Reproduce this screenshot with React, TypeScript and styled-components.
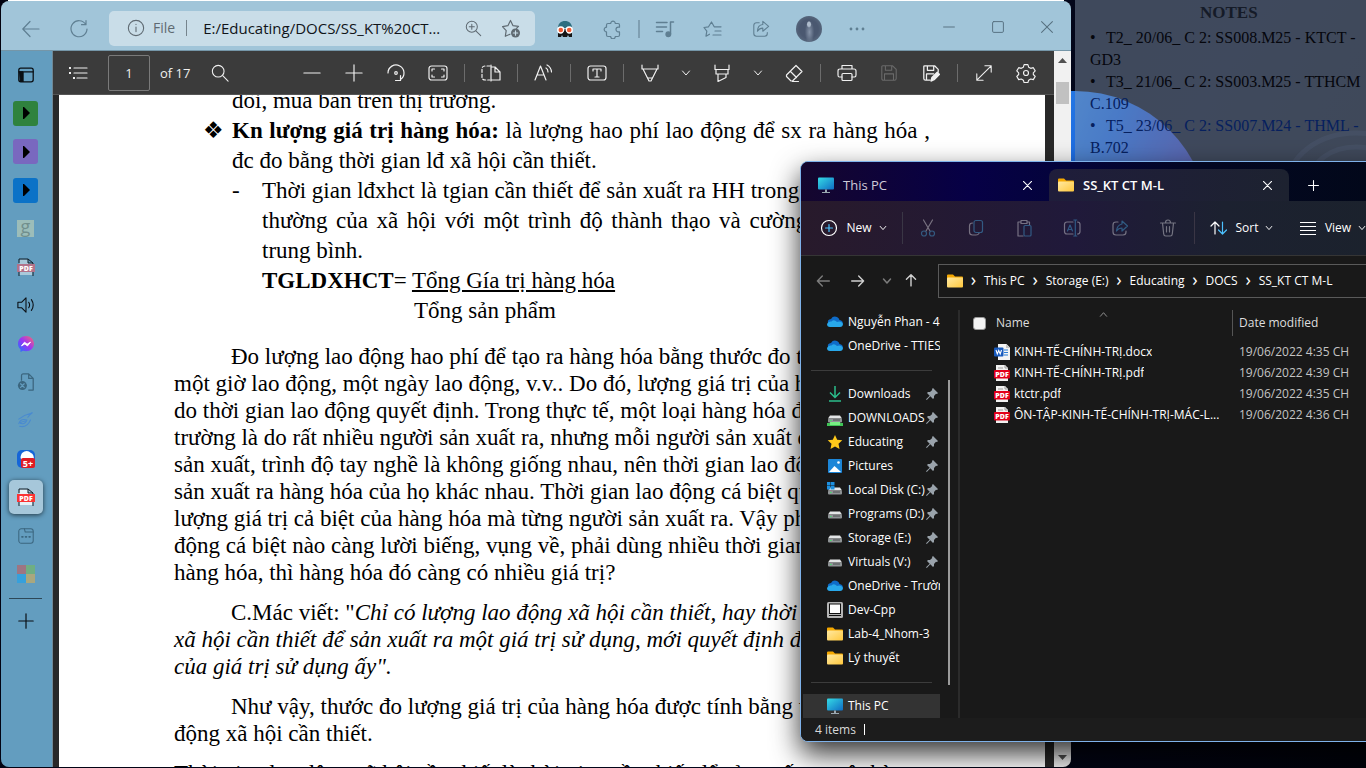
import React from 'react';
import styled, { createGlobalStyle, css } from 'styled-components';

const GlobalStyle = createGlobalStyle`
  * { box-sizing: border-box; }
  html, body, #root { height: 100%; margin: 0; }
  body { overflow: hidden; background: #03061a; }
  button, input { font: inherit; color: inherit; margin: 0; }
  button { display: inline-flex; align-items: center; justify-content: center; border: 0; padding: 0; background: none; }
  a { color: inherit; text-decoration: none; }
  ul { list-style: none; margin: 0; padding: 0; }
  p { margin: 0; }
`;

const ui = `"Segoe UI", "Open Sans", "Noto Sans", sans-serif`;
const serif = `"Times New Roman", "Liberation Serif", serif`;

/* ---------- drawings ---------- */

type IconProps = { size?: number; sw?: number; children: React.ReactNode };
const Icon = ({ size = 20, sw = 1.2, children }: IconProps) => (
  <svg width={size} height={size} viewBox="0 0 20 20" fill="none" stroke="currentColor" strokeWidth={sw} strokeLinecap="round" strokeLinejoin="round" aria-hidden="true">
    {children}
  </svg>
);

const BackArrow = () => <Icon><path d="M18 10H2M9 2.500 1.800 10 9 17.500" /></Icon>;
const Refresh = () => <Icon><path d="M16.800 5.500A8 8 0 1 0 18 10M17 1.500v4.200h-4.500" /></Icon>;
const Info = () => <Icon size={18}><circle cx="10" cy="10" r="8.500" /><path d="M10 9v5M10 6v.2" /></Icon>;
const ZoomIn = () => <Icon size={17}><circle cx="8" cy="8" r="6.500" /><path d="m13 13 5.500 5.500M8 5v6M5 8h6" /></Icon>;
const StarAdd = () => (
  <Icon>
    <path d="M9 16.200 4.300 18.300l.9-5.600L1.500 8.600l5.400-.9L9.500 2.500l2.400 5.100 5.600.8-2 2" />
    <circle cx="14.500" cy="15" r="4.500" fill="currentColor" stroke="none" />
    <path d="M14.500 12.800v4.400M12.300 15h4.400" stroke="#c9dde8" />
  </Icon>
);
const Owl = () => (
  <svg width="18" height="18" viewBox="0 0 18 18" aria-hidden="true">
    <path d="M2 8c0-4.500 3-7 7-7s7 2.500 7 7z" fill="#2d6e80" />
    <path d="M2 9h14v8h-3l-1-2-1 2H7l-1-2-1 2H2z" fill="#151515" />
    <circle cx="4.800" cy="10" r="3.700" fill="#fff" /><circle cx="13.200" cy="10" r="3.700" fill="#fff" />
    <circle cx="4.800" cy="10" r="2.300" fill="#ee5a33" /><circle cx="13.200" cy="10" r="2.300" fill="#ee5a33" />
    <path d="m9 10-3.500 5h7z" fill="#151515" />
  </svg>
);
const Puzzle = () => <Icon><path d="M5 4.500h2.700a2.300 2.300 0 1 1 4.600 0H15q1.500 0 1.500 1.500v2.200h-1.200a2.300 2.300 0 1 0 0 4.600h1.200V16q0 1.500-1.500 1.500h-2.700a2.300 2.300 0 0 1-4.600 0H5q-1.500 0-1.500-1.500v-3.200a2.300 2.300 0 1 1 0-4.600V6q0-1.500 1.500-1.500z" /></Icon>;
const MusicList = () => <Icon sw={1.500}><path d="M1.500 3.500H12M1.500 8h10M1.500 12.500h6M15.500 15V3h3" /><circle cx="13.300" cy="15.300" r="2.200" fill="currentColor" /></Icon>;
const StarList = () => <Icon><path d="m6.500 15.200-3.500 2 .8-5L1 8.500l4.500-.7L8.500 3l2.700 4.800H18M12 12h6M10 16h8" /></Icon>;
const Share = () => <Icon size={18}><path d="M8 3H5a3 3 0 0 0-3 3v9a3 3 0 0 0 3 3h9a3 3 0 0 0 3-3v-1M12 5V1.500L18.500 7 12 12.500V9C9 9 7.500 10 6 12.500 6.200 8 8.500 5.300 12 5z" /></Icon>;
const Dots = () => <Icon><g fill="currentColor" stroke="none"><circle cx="4" cy="10" r="1.400" /><circle cx="10" cy="10" r="1.400" /><circle cx="16" cy="10" r="1.400" /></g></Icon>;
const Minimise = () => <Icon size={12} sw={1.6}><path d="M1 10h18" /></Icon>;
const Maximise = () => <Icon size={12} sw={1.6}><rect x="1" y="1" width="18" height="18" rx="2" /></Icon>;
const Close = ({ size = 12, sw = 1.7 }: { size?: number; sw?: number }) => <Icon size={size} sw={sw}><path d="m1 1 18 18M19 1 1 19" /></Icon>;
const Plus = ({ size = 18, sw = 1.3 }: { size?: number; sw?: number }) => <Icon size={size} sw={sw}><path d="M10 1v18M1 10h18" /></Icon>;
const Minus = () => <Icon size={18} sw={1.3}><path d="M1 10h18" /></Icon>;
const Chevron = ({ size = 10, sw = 2 }: { size?: number; sw?: number }) => <Icon size={size} sw={sw}><path d="m3 6 7 8 7-8" /></Icon>;

const ListIcon = () => <Icon><path d="M6 5h13M6 10h13M9 15h10" /><g fill="currentColor" stroke="none"><rect x="1" y="4" width="2" height="2" /><rect x="1" y="9" width="2" height="2" /><rect x="5" y="14" width="2" height="2" /></g></Icon>;
const Search = () => <Icon size={18}><circle cx="8" cy="8" r="6.500" /><path d="m13 13 6 6" /></Icon>;
const Rotate = () => <Icon><path d="M2 10a8 8 0 1 1 12.500 6.600M14.500 12.500v5h-5" /><circle cx="10" cy="10" r="1.300" /></Icon>;
const FitPage = () => <Icon><rect x="1" y="3" width="18" height="14" rx="2.500" /><path d="M4 8V6h2.500M13.500 6H16v2M16 12v2h-2.500M6.500 14H4v-2" /></Icon>;
const PageView = () => <Icon><path d="M9 3H4.500Q1 3 1 6v8q0 3 3.500 3H9" strokeDasharray="3 2" /><path d="M10 2v16M10 4h4l5 5v8h-9M14 4v5h5" /></Icon>;
const ReadAloud = () => <Icon><path d="m1 17 5.500-14L12 17M3 12h7M12 5q2 1 2 4M13 2q4 2 4.500 7" /></Icon>;
const TextBox = () => <Icon><rect x="1" y="3" width="18" height="14" rx="2.500" /><path d="M6 8V6h8v2M10 6v8M8 14h4" /></Icon>;
const Pen = () => <Icon><path d="M2 2v4h16V2M3 6l6 12h2l6-12M8 15h4" /></Icon>;
const Marker = () => <Icon><path d="M3 2v4.500h14V2M4 6.500V11h12V6.500M6 11v7.500l8-4V11" /></Icon>;
const Eraser = () => <Icon><path d="m2.500 12 9.500-9.500 6 6-9.500 9.500H7l-4.500-4.500zM6.500 8.500l6 6M8.500 18.500h6" /></Icon>;
const Print = () => <Icon><path d="M5 6V2.500h10V6M5 14H2.500Q1 14 1 12V8q0-2 2-2h14q2 0 2 2v4q0 2-1.500 2H15" /><rect x="5" y="10.500" width="10" height="7" rx="1" /></Icon>;
const savePath = 'M3 2h11l4 4v10q0 2-2 2H4q-2 0-2-2V3q0-1 1-1M6 2v5h7V2M5 18v-7h10v7';
const Save = () => <Icon size={18}><path d={savePath} /></Icon>;
const SaveAs = () => <Icon size={18} sw={1.4}><path d="M9 18H4q-2 0-2-2V3q0-1 1-1h11l4 4v3M6 2v5h7V2M5 18v-7h8" /><path d="m10 19 1-4 6-6 2.500 2.500-6 6z" fill="currentColor" /></Icon>;
const Expand = () => <Icon size={18}><path d="m2 18 16-16M11 2h7v7M9 18H2v-7" /></Icon>;
const Gear = () => <Icon><circle cx="10" cy="10" r="2.500" /><path d="m8 1.500 4 0 .8 2.700 2.200 1.200 2.700-.7 2 3.400-2 2 0 1.800 2 2-2 3.400-2.700-.7-2.200 1.300-.8 2.600H8l-.8-2.600L5 16.600l-2.700.7-2-3.400 2-2v-1.800l-2-2 2-3.400 2.700.7 2.200-1.200z" transform="translate(.5 .2) scale(.95)" /></Icon>;

const Panel = () => <Icon size={16} sw={1.600}><rect x="1" y="1.500" width="18" height="17" rx="2.500" /><path d="M1 6h18M6 6v12" /><path d="M2 6h4v12H3z" fill="currentColor" /></Icon>;
const Play = () => <svg width="8" height="12" viewBox="0 0 8 12" aria-hidden="true"><path d="M1 0h1l6 6-6 6H1z" fill="#000" /></svg>;
const PdfPage = ({ label, page }: { label: string; page: string }) => (
  <svg width="18" height="18" viewBox="0 0 18 18" aria-hidden="true">
    <path d="M2.500 1.500H11V5h4.500v12h-13z" fill={page} />
    <path d="M2 5V1h9l5 4v2M11 1v4h5M2 14v4M16 14v4" fill="none" stroke="#101c26" />
    <rect y="6" width="18" height="8" fill={label} />
    <text x="9" y="12.500" fontFamily="Open Sans" fontSize="7" fontWeight="800" textAnchor="middle" fill="#fff">PDF</text>
  </svg>
);
const Speaker = () => <Icon size={18}><path d="M1 7v6h4l5 5V2L5 7zM13 7q2 3 0 6M16 4q4 6 0 12" /></Icon>;
const Messenger = () => (
  <svg width="16" height="16" viewBox="0 0 16 16" aria-hidden="true">
    <defs><linearGradient id="msg" x1="0" y1="1" x2="1" y2="0"><stop offset="0" stopColor="#1677ff" /><stop offset=".5" stopColor="#9a35f5" /><stop offset="1" stopColor="#ff6a6a" /></linearGradient></defs>
    <path d="M8 0C3.500 0 0 3.300 0 7.700c0 2.400 1 4.300 2.500 5.600V16l2.400-1.200c1 .3 2 .4 3.100.4 4.500 0 8-3.200 8-7.500S12.500 0 8 0z" fill="url(#msg)" />
    <path d="m3.500 9.800 3-3.600 2.600 2 3.400-2-3 3.700-2.600-2z" fill="#fff" stroke="#fff" strokeLinejoin="round" />
  </svg>
);
const DeadPage = () => <Icon size={18} sw={1.400}><path d="M5 8V3q0-2 2-2h6l5 5v13h-5M13 1v5h5" /><circle cx="6" cy="14" r="5" fill="currentColor" stroke="none" /><path d="m4 12 4 4M8 12l-4 4" stroke="#639dbf" /></Icon>;
const Swirl = () => <Icon size={18}><path d="M2 9q7-5 15-7-3 2-5 5M3 17q8 2 12-7M2 14q2-6 9-4-2 5-6 4t4-3" /></Icon>;
const FivePlus = () => (
  <svg width="18" height="18" viewBox="0 0 18 18" aria-hidden="true">
    <rect width="18" height="18" rx="5" fill="#1565d8" /><path d="M5 3q5-4 9 0 3 1 3 7H5Q2 8 5 3" fill="#fff" />
    <rect x="4" y="8" width="14" height="10" rx="2" fill="#e01b24" />
    <text x="11" y="16.500" fontFamily="Open Sans" fontSize="9" fontWeight="700" textAnchor="middle" fill="#fff">5+</text>
  </svg>
);
const TabBox = () => <Icon size={16} sw={1.300}><rect x="1" y="1" width="18" height="18" rx="3" /><path d="M8 1l1 4h10" /><path d="M5 11h1M9.500 11h1M14 11h1" strokeWidth="2.200" /></Icon>;
const Squares = () => <svg width="18" height="18" viewBox="0 0 18 18" aria-hidden="true"><path fill="#9d7583" d="M0 0h9v9H0z" /><path fill="#6fae83" d="M9 0h9v9H9z" /><path fill="#36a0dc" d="M0 9h9v9H0z" /><path fill="#a9a77e" d="M9 9h9v9H9z" /></svg>;

const Monitor = () => (
  <svg width="16" height="16" viewBox="0 0 16 16" aria-hidden="true">
    <defs><linearGradient id="mon" x2="1" y2="1"><stop stopColor="#35dbe5" /><stop offset="1" stopColor="#0f6cc4" /></linearGradient></defs>
    <rect y="0.500" width="16" height="12" rx="1" fill="url(#mon)" /><path d="M7 12.500h2V15h3v1H4v-1h3z" fill="#9aa7b0" />
  </svg>
);
const Folder = () => (
  <svg width="16" height="16" viewBox="0 0 16 16" aria-hidden="true">
    <defs><linearGradient id="fol" x2="1" y2="1"><stop stopColor="#ffe9a2" /><stop offset="1" stopColor="#ffc83d" /></linearGradient></defs>
    <path d="M0 2.500Q0 1.500 1 1.500h5l2 2h7q1 0 1 1V8H0z" fill="#f5a800" /><rect y="4.500" width="16" height="10" rx="1" fill="url(#fol)" />
  </svg>
);
const Cloud = () => (
  <svg width="16" height="16" viewBox="0 0 16 16" aria-hidden="true">
    <path d="M1 9Q0 5.500 4 5q2-3.500 6-2 2 .8 2.500 3Q16 6.500 16 10z" fill="#0f6cc8" />
    <path d="M0 10q1-3 4.500-2.500Q7 5 10 8q4-1.500 6 2-.2 3-3 3H3q-3 0-3-3" fill="#28a8ea" />
  </svg>
);
const DownloadIcon = () => <svg width="16" height="16" viewBox="0 0 16 16" fill="none" stroke="#2bbd8b" strokeWidth="1.500" aria-hidden="true"><path d="M8 0v11M3 6.500l5 5 5-5M2 15h12" /></svg>;
const Drive = ({ tone }: { tone?: 'green' | 'win' }) => (
  <svg width="16" height="16" viewBox="0 0 16 16" aria-hidden="true">
    <path d="m1 8.500 2-3h10l2 3z" fill="#e3e5e6" /><rect x="1" y="8.500" width="14" height="4" rx="1" fill="#8f9496" /><path d="M3 10h1.500v1H3z" fill="#41e36a" /><path d="M6 10h7" stroke="#4c4f50" />
    {tone === 'green' && <><path d="M0 13h16v3H0z" fill="#3fc456" /><path d="M3 12h10v3H3z" fill="#77ef83" /></>}
    {tone === 'win' && <path d="M0 0h3.500v3.500H0zM4 0h3.500v3.500H4zM0 4h3.500v3.500H0zM4 4h3.500v3.500H4z" fill="#1d90e0" />}
  </svg>
);
const Star = () => <svg width="16" height="16" viewBox="0 0 16 16" aria-hidden="true"><path d="m8 1 2.200 4.700 5.100.6-3.800 3.500 1 5.100L8 12.400l-4.500 2.500 1-5.100L.7 6.300l5.100-.6z" fill="#ffc91a" /></svg>;
const Picture = () => <svg width="16" height="16" viewBox="0 0 16 16" aria-hidden="true"><rect x="1" y="1" width="14" height="14" rx="1" fill="#1c86d8" /><path d="m2 14 5.500-6L14 14z" fill="#fff" /><circle cx="11.500" cy="4.500" r="1.300" fill="#fff" /></svg>;
const DevBox = () => <svg width="16" height="16" viewBox="0 0 16 16" aria-hidden="true"><rect width="16" height="16" rx="1.500" fill="#b5b5b5" /><rect x="2.500" y="2" width="11" height="9.500" fill="#fff" stroke="#111" /><path d="M2 13.500h12" stroke="#111" /></svg>;
const Pin = () => <svg width="12" height="12" viewBox="0 0 12 12" aria-hidden="true"><path d="m7 0 5 5-1 1-1-.2-2 2.200v2L7 11 4.300 8.300.8 12 0 11.200l3.700-3.500L1 5l1-1h2l2.200-2L6 1z" fill="#9aa3ab" /></svg>;
const WordFile = () => (
  <svg width="16" height="16" viewBox="0 0 16 16" aria-hidden="true">
    <path d="M4 0h8.500L16 3.500V16H4z" fill="#f4f4f4" /><path d="M12 0v4h4" fill="#c4c4c4" /><path d="M10 6h4M10 8.500h4M10 11h4" stroke="#2b7cd3" />
    <rect y="3.500" width="9.500" height="9" rx="1" fill="#185abd" /><path d="m2 6 1.300 4L4.700 6.500 6.200 10l1.300-4" fill="none" stroke="#fff" strokeWidth="1.100" />
  </svg>
);
const PdfFile = () => (
  <svg width="16" height="16" viewBox="0 0 16 16" aria-hidden="true">
    <path d="M2 0h9l3 3v13H2z" fill="#f1f1f1" /><path d="M11 0v3h3M4 3h5" fill="none" stroke="#9c9c9c" />
    <rect y="5" width="16" height="8.500" rx="1" fill="#e2001a" />
    <text x="8" y="11.800" fontFamily="Open Sans" fontSize="7" fontWeight="800" textAnchor="middle" fill="#fff">PDF</text>
  </svg>
);

const Two = styled.svg.attrs({ width: 20, height: 20, viewBox: '0 0 20 20', 'aria-hidden': true })`
  fill: none; stroke: currentColor; stroke-width: 1.2; stroke-linecap: round; stroke-linejoin: round;
  .b { stroke: #4cc2ff; }
`;
const NewIcon = () => <Two><circle cx="10" cy="10" r="7.500" /><path className="b" d="M10 6.500v7M6.500 10h7" /></Two>;
const Cut = () => <Two><path d="m5.500 2 6.500 11M14.500 2 8 13" /><g className="b"><circle cx="6" cy="15.500" r="2.500" /><circle cx="14" cy="15.500" r="2.500" /></g></Two>;
const Copy = () => <Two><path d="M6.500 5Q3.500 5 3.500 8v6q0 3 3 3H10q2 0 3-1.500" /><rect className="b" x="8" y="2.500" width="8.500" height="12" rx="2" /></Two>;
const Paste = () => <Two><path d="M7 4H4v14h5M13 4h2.500v3M7 2.500h6v3H7z" /><rect className="b" x="10" y="7.500" width="7" height="10.500" rx="1" /></Two>;
const Rename = () => <Two><path d="M11 4H5Q2.500 4 2.500 6.500v7Q2.500 16 5 16h6M15.500 4q2.500 0 2.500 2.500v7q0 2.500-2.500 2.500" /><path className="b" d="M13.300 2v16M11.800 2h3M11.800 18h3M5.500 13 8 7l2.500 6M6.300 11.500h3.500" /></Two>;
const ShareBlue = () => <Two><path d="M8 4H6Q3 4 3 7v7q0 3 3 3h7q3 0 3-3v-1" /><path className="b" d="M12 6V3l5.500 5-5.500 5v-3Q8.500 10 6.500 13 7 7 12 6z" /></Two>;
const Trash = () => <Two><path d="M2.500 5h15M4.500 5l1.200 11q.2 2 2 2h4.600q1.800 0 2-2L15.500 5M7.500 5q0-3 2.500-3t2.500 3M8.500 8.500v5.500M11.500 8.500v5.500" /></Two>;
const SortIcon = () => <Two><path d="M6 16V4M2 8l4-4 4 4" /><path className="b" d="M13.500 4v12M9.500 12l4 4 4-4" /></Two>;
const ViewIcon = () => <Two><path d="M2 4.500h16M2 8.500h16M2 12.500h16M2 16.500h16" strokeLinecap="butt" /></Two>;

/* ---------- desktop ---------- */

const Desktop = styled.main`
  position: relative;
  width: 100%;
  height: 100vh;
  min-height: 600px;
  overflow: hidden;
  background: linear-gradient(120deg, #02020f, #03071c 70%, #01020a);
`;
const Bloom = styled.svg`
  position: absolute;
  top: 0;
  right: 0;
`;
const Notes = styled.aside`
  position: absolute;
  top: 0;
  right: 0;
  width: 291px;
  height: 200px;
  padding: 2px 0 0 15px;
  background: rgba(138, 156, 172, 0.45);
  font: 16px/22px "Palatino Linotype", "Book Antiqua", "Liberation Serif", serif;
  color: #05060c;
  white-space: nowrap;
`;
const NotesTitle = styled.h2`
  margin: 0 0 3px 110px;
  font: inherit;
  font-size: 17px;
  font-weight: 700;
  color: #151b28;
`;
const NoteLine = styled.li<{ $blue?: boolean }>`
  color: ${p => (p.$blue ? '#06205e' : 'inherit')};
`;
const Bullet = styled.span`
  display: inline-block;
  width: 16px;
`;

/* ---------- browser ---------- */

const Browser = styled.section`
  position: absolute;
  top: 1px;
  left: 1px;
  right: 295px;
  bottom: 1px;
  display: flex;
  flex-direction: column;
  border-radius: 8px;
  overflow: hidden;
  background: #282828;
  font-family: ${ui};
`;
const TopEdge = styled.div`
  position: absolute;
  top: 0;
  left: 8px;
  right: 302px;
  height: 1px;
  background: #fff;
`;
const TitleBar = styled.header`
  display: flex;
  align-items: center;
  gap: 16px;
  height: 50px;
  flex: none;
  padding: 0 0 0 14px;
  background: #a1c5d9;
  border-bottom: 1px solid #7596a8;
  color: #5f7f92;
`;
const IconButton = styled.button`
  width: 32px;
  height: 32px;
  flex: none;
  padding-top: 6px;
`;
const Address = styled.div`
  display: flex;
  align-items: center;
  flex: 1;
  min-width: 0;
  height: 35px;
  margin: 5px -2px 0;
  padding: 0 8px 0 18px;
  border-radius: 5px;
  background: #c9dde8;
  color: #5f6a72;
  font-size: 15px;
`;
const FileLabel = styled.label`
  padding: 0 11px 0 8px;
  border-right: 1px solid #76848d;
  line-height: 16px;
  margin-right: 16px;
  font-size: 14px;
`;
const Url = styled.input`
  flex: 1;
  min-width: 0;
  border: 0;
  padding: 0;
  background: none;
  color: #101418;
  outline: 0;
  text-overflow: ellipsis;
`;
const AddressButton = styled.button`
  width: 32px;
  height: 32px;
  margin-left: 6px;
`;
const BarRule = styled.span`
  width: 2px;
  height: 18px;
  margin: 6px -7px 0;
  background: #7f9fb2;
`;
const Avatar = styled.span`
  width: 26px;
  height: 26px;
  border-radius: 50%;
  background:
    radial-gradient(ellipse at 50% 32%, #aebccc 0 8%, transparent 14%),
    radial-gradient(ellipse 18% 45% at 52% 62%, #8593a8, transparent),
    radial-gradient(circle at 50% 50%, #4a5870 50%, #66798c);
`;
const Controls = styled.div`
  display: flex;
  margin-left: 35px;
  align-self: stretch;
  color: #56707f;
`;
const Control = styled.button`
  width: 49px;
  padding-top: 2px;
`;
const Body = styled.div`
  display: flex;
  flex: 1;
  min-height: 0;
`;
const Sidebar = styled.nav`
  width: 52px;
  flex: none;
  display: flex;
  flex-direction: column;
  align-items: center;
  padding: 7px 2px 0 0;
  background: #639dbf;
  border-right: 1px solid #6f8896;
`;
const SideTabs = styled.ul`
  display: flex;
  flex-direction: column;
  justify-content: space-between;
  height: 533px;
`;
const SideTab = styled.button<{ $active?: boolean; $dim?: boolean }>`
  width: 34px;
  height: 34px;
  display: flex;
  color: ${p => (p.$dim ? '#3b667f' : '#0a0f14')};
  ${p => p.$active && css`
    border-radius: 5px;
    background: #a6c7da;
    box-shadow: 0 1px 5px rgba(0, 0, 0, 0.65);
  `}
`;
const Tile = styled.span<{ $bg: string }>`
  display: grid;
  place-items: center;
  width: 25px;
  height: 25px;
  border-radius: 3px;
  background: ${p => p.$bg};
`;
const Goodreads = styled.span`
  width: 17px;
  height: 17px;
  background: #9cbdb9;
  color: #718f8d;
  font-size: 18px;
  line-height: 12px;
`;
const SwirlTint = styled.span`
  display: flex;
  color: #4a8bd0;
`;
const SideRule = styled.hr`
  width: 33px;
  margin: 7px 0 5px;
  border: 0;
  border-top: 1px solid #2d4757;
`;
const Viewer = styled.div`
  flex: 1;
  min-width: 0;
  display: flex;
  flex-direction: column;
`;
const PdfBar = styled.div`
  display: flex;
  justify-content: space-between;
  height: 44px;
  flex: none;
  padding: 0 12px 0 9px;
  background: #3b3b3b;
  border-bottom: 1px solid #555;
  color: #f0f0f0;
  font-size: 13px;
`;
const ToolGroup = styled.div`
  display: flex;
  align-items: center;
  gap: 10px;
`;
const Tool = styled.button<{ $narrow?: boolean }>`
  width: ${p => (p.$narrow ? 20 : 32)}px;
  height: 32px;
  &:disabled { color: #6a6a6a; }
`;
const ToolRule = styled.span`
  width: 1px;
  height: 18px;
  background: #6c6c6c;
`;
const PageBox = styled.input`
  width: 42px;
  height: 36px;
  margin-left: 4px;
  border: 1px solid #7a7a7a;
  border-radius: 2px;
  background: none;
  text-align: center;
`;
const PageCount = styled.label`
  width: 34px;
  white-space: nowrap;
`;
const ScrollArea = styled.div`
  flex: 1;
  min-height: 0;
  overflow: hidden;
  padding: 0 9px 0 6px;
`;
const Split = styled.div`
  display: flex;
  flex: 1;
  min-width: 0;
`;
const Scrollbar = styled.div`
  width: 17px;
  flex: none;
  display: flex;
  flex-direction: column;
  align-items: center;
  padding: 7px 0 6px;
  background: #f1f1f1;
  color: #505050;
`;
const Thumb = styled.div`
  width: 13px;
  height: 22px;
  margin: 18px 0 auto;
  background: #c1c1c1;
`;
const Sheet = styled.article`
  height: 100%;
  overflow: hidden;
  padding: 0 115px;
  background: #fff;
  color: #000;
  font: 23px/27px ${serif};
  white-space: nowrap;
`;
const Outline = styled.div`
  margin: -9px 0 17px;
  padding-left: 58px;
  line-height: 30px;
`;
const Nested = styled.div`
  padding-left: 30px;
`;
const Paragraph = styled.p`
  margin-bottom: 13px;
  text-indent: 57px;
`;
const Line = styled.span<{ $justify?: boolean }>`
  display: block;
  text-align: justify;
  text-align-last: ${p => (p.$justify ? 'justify' : 'left')};
  & + & { text-indent: 0; }
`;
const Hang = styled.span<{ $w: number }>`
  display: inline-block;
  width: ${p => p.$w}px;
  margin-left: -${p => p.$w}px;
  text-align-last: left;
  font-family: ${serif}, "DejaVu Sans";
`;
const Fraction = styled.p`
  padding-left: 152px;
`;

/* ---------- file explorer ---------- */

const Explorer = styled.section`
  position: absolute;
  top: 161px;
  left: 800px;
  right: -40px;
  bottom: 26px;
  display: flex;
  flex-direction: column;
  border: 1px solid #7fb2ea;
  border-radius: 8px;
  overflow: hidden;
  background: #191919;
  box-shadow: 0 12px 28px rgba(0, 0, 0, 0.8);
  color: #fff;
  font: 12px/16px ${ui};
  white-space: nowrap;
`;
const TabStrip = styled.div`
  display: flex;
  align-items: flex-end;
  height: 39px;
  flex: none;
  background: linear-gradient(90deg, #15062e, #060046 28%, #04043a 45%, #030722 65%, #020818);
`;
const Tab = styled.div<{ $active?: boolean }>`
  display: flex;
  align-items: center;
  width: ${p => (p.$active ? 240 : 248)}px;
  height: 32px;
  padding: 0 14px 0 ${p => (p.$active ? 9 : 17)}px;
  border-radius: 8px 8px 0 0;
  background: ${p => (p.$active ? 'linear-gradient(90deg, #1f1d3b, #1d2230)' : 'none')};
  color: ${p => (p.$active ? '#fff' : '#cfcbd8')};
  font-size: 13px;
  font-weight: ${p => (p.$active ? 600 : 400)};
  span { flex: 1; margin-left: 9px; }
`;
const TabClose = styled.button`
  width: 16px;
  height: 16px;
  color: #fff;
`;
const NewTab = styled.button`
  width: 48px;
  height: 32px;
  color: #fff;
`;
const Commands = styled.div`
  display: flex;
  align-items: center;
  height: 55px;
  flex: none;
  background: linear-gradient(90deg, #281a2b, #20193a 45%, #1c2130 70%, #1b222c);
  border-bottom: 1px solid #353535;
  font-weight: 500;
`;
const Command = styled.button<{ $w: number }>`
  width: ${p => p.$w}px;
  height: 36px;
  gap: 7px;
  flex: none;
  &:disabled { opacity: 0.38; }
`;
const CommandRule = styled.span<{ $right?: boolean }>`
  width: 1px;
  height: 32px;
  margin: 0 ${p => (p.$right ? 12 : 1)}px 0 ${p => (p.$right ? 2 : -3)}px;
  background: #3a3645;
`;
const PathRow = styled.div`
  display: flex;
  align-items: center;
  height: 54px;
  flex: none;
  padding: 0 0 5px 4px;
`;
const NavButton = styled.button<{ $dim?: boolean; $narrow?: boolean }>`
  width: ${p => (p.$narrow ? 24 : 35)}px;
  height: 32px;
  color: ${p => (p.$dim ? '#7c7c7c' : '#d0d0d0')};
`;
const Crumbs = styled.ol`
  display: flex;
  align-items: center;
  flex: 1;
  height: 34px;
  margin: 0 0 0 15px;
  padding: 0 0 0 8px;
  border: 1px solid #5a5a5a;
  list-style: none;
  li { display: flex; align-items: center; }
  li::after { content: "›"; width: 21px; text-align: center; font-size: 18px; line-height: 14px; padding-bottom: 3px; }
  li:last-child::after { content: none; }
`;
const Panes = styled.div`
  display: flex;
  flex: 1;
  min-height: 0;
`;
const NavPane = styled.nav`
  display: flex;
  width: 159px;
  flex: none;
  border-right: 2px solid #2b2b2b;
`;
const NavList = styled.ul`
  width: 139px;
  overflow: hidden;
`;
const NavItem = styled.a<{ $selected?: boolean }>`
  display: flex;
  align-items: center;
  height: 24px;
  margin-left: 2px;
  padding-left: 24px;
  background: ${p => (p.$selected ? '#333' : 'none')};
  span { flex: 1; margin-left: 5px; }
  svg { flex: none; }
  svg + span + svg { margin-right: 2px; }
`;
const NavRule = styled.li`
  height: 24px;
  padding-top: 12px;
  &::before { content: ""; display: block; margin: 0 8px 0 10px; border-top: 1px solid #3c3c3c; }
`;
const NavScroll = styled.div`
  width: 2px;
  height: 305px;
  margin: 70px 0 0 8px;
  background: #9b9b9b;
`;
const Files = styled.table`
  align-self: flex-start;
  width: 100%;
  table-layout: fixed;
  border-collapse: collapse;
  th, td { padding: 0; text-align: left; font-weight: 400; height: 21px; }
  thead th { height: 31px; padding-bottom: 5px; color: #dedede; }
  th:first-child { width: 272px; padding-left: 13px; }
  td:first-child { padding-left: 34px; }
  td:last-child { padding-left: 7px; color: #c4c4c4; }
`;
const HeadCell = styled.div`
  display: flex;
  align-items: center;
  gap: 10px;
  height: 26px;
`;
const DateHead = styled.div`
  height: 26px;
  padding-left: 6px;
  border-left: 1px solid #555;
  line-height: 26px;
`;
const SortMark = styled.span`
  align-self: flex-start;
  margin: 0 0 0 59px;
  height: 8px;
  color: #9a9a9a;
  svg { display: block; transform: rotate(180deg); }
`;
const SelectAll = styled.input`
  appearance: none;
  width: 13px;
  height: 13px;
  border-radius: 3px;
  background: #f3f3f3;
  border: 1px solid #999;
`;
const FileLink = styled.a`
  display: flex;
  align-items: center;
  gap: 4px;
  width: 230px;
  svg { flex: none; }
  span { overflow: hidden; text-overflow: ellipsis; }
`;
const Status = styled.footer`
  display: flex;
  align-items: center;
  gap: 8px;
  height: 23px;
  flex: none;
  padding-left: 14px;
  background: #1c1c1c;
  color: #d8d8d8;
  &::after { content: ""; width: 1px; height: 11px; background: #fff; }
`;

/* ---------- data ---------- */

const sideTabs: { name: string; icon: React.ReactNode; dim?: boolean; active?: boolean }[] = [
  { name: 'Tab actions', icon: <Panel /> },
  { name: 'Green group', icon: <Tile $bg="#2f823e"><Play /></Tile> },
  { name: 'Purple group', icon: <Tile $bg="#7968bf"><Play /></Tile> },
  { name: 'Blue group', icon: <Tile $bg="#0b72c7"><Play /></Tile> },
  { name: 'Goodreads', icon: <Goodreads>g</Goodreads> },
  { name: 'PDF, sleeping', icon: <PdfPage label="#b2738a" page="#a9c9da" />, dim: true },
  { name: 'Playing audio', icon: <Speaker /> },
  { name: 'Messenger', icon: <Messenger /> },
  { name: 'Unavailable page', icon: <DeadPage />, dim: true },
  { name: 'Course page', icon: <SwirlTint><Swirl /></SwirlTint> },
  { name: 'Notifications', icon: <FivePlus /> },
  { name: 'PDF', icon: <PdfPage label="#fb3434" page="#e8f1f6" />, active: true },
  { name: 'New tab', icon: <TabBox />, dim: true },
  { name: 'Microsoft', icon: <Squares /> },
];

const navTop: [string, React.ReactNode][] = [['Nguyễn Phan - 4t', <Cloud />], ['OneDrive - TTIES', <Cloud />]];
const navMain: [string, React.ReactNode, boolean?][] = [
  ['Downloads', <DownloadIcon />, true],
  ['DOWNLOADS', <Drive tone="green" />, true],
  ['Educating', <Star />, true],
  ['Pictures', <Picture />, true],
  ['Local Disk (C:)', <Drive tone="win" />, true],
  ['Programs (D:)', <Drive />, true],
  ['Storage (E:)', <Drive />, true],
  ['Virtuals (V:)', <Drive />, true],
  ['OneDrive - Trường', <Cloud />],
  ['Dev-Cpp', <DevBox />],
  ['Lab-4_Nhom-3', <Folder />],
  ['Lý thuyết', <Folder />],
];
const files: [string, string, React.ReactNode][] = [
  ['KINH-TẾ-CHÍNH-TRỊ.docx', '19/06/2022 4:35 CH', <WordFile />],
  ['KINH-TẾ-CHÍNH-TRỊ.pdf', '19/06/2022 4:39 CH', <PdfFile />],
  ['ktctr.pdf', '19/06/2022 4:35 CH', <PdfFile />],
  ['ÔN-TẬP-KINH-TẾ-CHÍNH-TRỊ-MÁC-L...', '19/06/2022 4:36 CH', <PdfFile />],
];
const measure = [
  'Đo lượng lao động hao phí để tạo ra hàng hóa bằng thước đo thời',
  'một giờ lao động, một ngày lao động, v.v.. Do đó, lượng giá trị của hàng',
  'do thời gian lao động quyết định. Trong thực tế, một loại hàng hóa được',
  'trường là do rất nhiều người sản xuất ra, nhưng mỗi người sản xuất do',
  'sản xuất, trình độ tay nghề là không giống nhau, nên thời gian lao động',
  'sản xuất ra hàng hóa của họ khác nhau. Thời gian lao động cá biệt quyết',
  'lượng giá trị cả biệt của hàng hóa mà từng người sản xuất ra. Vậy phải',
  'động cá biệt nào càng lười biếng, vụng về, phải dùng nhiều thời gian',
  'hàng hóa, thì hàng hóa đó càng có nhiều giá trị?',
];
const quote = [
  'Chỉ có lượng lao động xã hội cần thiết, hay thời gian',
  'xã hội cần thiết để sản xuất ra một giá trị sử dụng, mới quyết định đại',
  'của giá trị sử dụng ấy".',
];

/* ---------- composition ---------- */

const Document = () => (
  <Sheet>
    <Outline>
      <Line>đổi, mua bán trên thị trường.</Line>
      <Line $justify><Hang $w={29}>❖</Hang><b>Kn lượng giá trị hàng hóa:</b> là lượng hao phí lao động để sx ra hàng hóa ,</Line>
      <Line>đc đo bằng thời gian lđ xã hội cần thiết.</Line>
      <Nested>
        <Line><Hang $w={30}>-</Hang>Thời gian lđxhct là tgian cần thiết để sản xuất ra HH trong</Line>
        <Line $justify>thường của xã hội với một trình độ thành thạo và cường độ lao động</Line>
        <Line>trung bình.</Line>
        <p><b>TGLDXHCT</b>= <u>Tổng Gía trị hàng hóa</u></p>
        <Fraction>Tổng sản phẩm</Fraction>
      </Nested>
    </Outline>
    <Paragraph>{measure.map(t => <Line key={t}>{t}</Line>)}</Paragraph>
    <Paragraph>
      <Line>C.Mác viết: "<i>{quote[0]}</i></Line>
      <Line><i>{quote[1]}</i></Line>
      <Line><i>{quote[2]}</i></Line>
    </Paragraph>
    <Paragraph>
      <Line>Như vậy, thước đo lượng giá trị của hàng hóa được tính bằng thời</Line>
      <Line>động xã hội cần thiết.</Line>
    </Paragraph>
    <p><Line>Thời gian lao động xã hội cần thiết là thời gian cần thiết để sản xuất ra một hàng</Line></p>
  </Sheet>
);

const BrowserWindow = () => (
  <Browser aria-label="Browser">
    <TitleBar>
      <IconButton aria-label="Back"><BackArrow /></IconButton>
      <IconButton aria-label="Refresh"><Refresh /></IconButton>
      <Address>
        <Info />
        <FileLabel htmlFor="url">File</FileLabel>
        <Url id="url" defaultValue="E:/Educating/DOCS/SS_KT%20CT%2..." />
        <AddressButton aria-label="Zoom"><ZoomIn /></AddressButton>
        <AddressButton aria-label="Add to favorites"><StarAdd /></AddressButton>
      </Address>
      <IconButton aria-label="Owl extension"><Owl /></IconButton>
      <IconButton aria-label="Extensions"><Puzzle /></IconButton>
      <BarRule />
      <IconButton aria-label="Media"><MusicList /></IconButton>
      <IconButton aria-label="Favorites"><StarList /></IconButton>
      <IconButton aria-label="Share"><Share /></IconButton>
      <IconButton aria-label="Profile"><Avatar /></IconButton>
      <IconButton aria-label="More"><Dots /></IconButton>
      <Controls>
        <Control aria-label="Minimize"><Minimise /></Control>
        <Control aria-label="Maximize"><Maximise /></Control>
        <Control aria-label="Close"><Close /></Control>
      </Controls>
    </TitleBar>
    <Body>
      <Sidebar aria-label="Vertical tabs">
        <SideTabs>
          {sideTabs.map(t => (
            <li key={t.name}><SideTab aria-label={t.name} $dim={t.dim} $active={t.active}>{t.icon}</SideTab></li>
          ))}
        </SideTabs>
        <SideRule />
        <SideTab aria-label="Add tab"><Plus size={16} sw={1.5} /></SideTab>
      </Sidebar>
      <Split>
        <Viewer>
          <PdfBar>
            <ToolGroup>
              <Tool aria-label="Contents"><ListIcon /></Tool>
              <PageBox id="page" defaultValue="1" />
              <PageCount htmlFor="page">of 17</PageCount>
              <Tool aria-label="Find"><Search /></Tool>
            </ToolGroup>
            <ToolGroup>
              <Tool aria-label="Zoom out"><Minus /></Tool>
              <Tool aria-label="Zoom in"><Plus /></Tool>
              <Tool aria-label="Rotate"><Rotate /></Tool>
              <Tool aria-label="Fit to page"><FitPage /></Tool>
              <ToolRule />
              <Tool aria-label="Page view"><PageView /></Tool>
              <ToolRule />
              <Tool aria-label="Read aloud"><ReadAloud /></Tool>
              <ToolRule />
              <Tool aria-label="Add text"><TextBox /></Tool>
              <ToolRule />
              <Tool aria-label="Draw"><Pen /></Tool>
              <Tool $narrow aria-label="Draw options"><Chevron /></Tool>
              <Tool aria-label="Highlight"><Marker /></Tool>
              <Tool $narrow aria-label="Highlight options"><Chevron /></Tool>
              <Tool aria-label="Erase"><Eraser /></Tool>
              <ToolRule />
              <Tool aria-label="Print"><Print /></Tool>
              <Tool aria-label="Save" disabled><Save /></Tool>
              <Tool aria-label="Save as"><SaveAs /></Tool>
              <ToolRule />
              <Tool aria-label="Full screen"><Expand /></Tool>
              <Tool aria-label="Settings"><Gear /></Tool>
            </ToolGroup>
          </PdfBar>
          <ScrollArea><Document /></ScrollArea>
        </Viewer>
        <Scrollbar>
          <svg width="9" height="6" viewBox="0 0 9 6" aria-hidden="true"><path d="M0 5h9L4.500 0z" fill="currentColor" /></svg>
          <Thumb />
          <svg width="9" height="6" viewBox="0 0 9 6" aria-hidden="true"><path d="M0 0h9L4.500 5z" fill="currentColor" /></svg>
        </Scrollbar>
      </Split>
    </Body>
  </Browser>
);

const NavEntry = ({ name, icon, pinned, selected }: { name: string; icon: React.ReactNode; pinned?: boolean; selected?: boolean }) => (
  <li><NavItem href="#" $selected={selected}>{icon}<span>{name}</span>{pinned && <Pin />}</NavItem></li>
);

const ExplorerWindow = () => (
  <Explorer aria-label="File Explorer">
    <TabStrip>
      <Tab><Monitor /><span>This PC</span><TabClose aria-label="Close This PC"><Close size={9} sw={2.4} /></TabClose></Tab>
      <Tab $active><Folder /><span>SS_KT CT M-L</span><TabClose aria-label="Close tab"><Close size={9} sw={2.4} /></TabClose></Tab>
      <NewTab aria-label="New tab"><Plus size={11} sw={2} /></NewTab>
    </TabStrip>
    <Commands>
      <Command $w={104}><NewIcon />New <Chevron size={8} sw={2.4} /></Command>
      <CommandRule />
      <Command $w={48} disabled aria-label="Cut"><Cut /></Command>
      <Command $w={48} disabled aria-label="Copy"><Copy /></Command>
      <Command $w={48} disabled aria-label="Paste"><Paste /></Command>
      <Command $w={48} disabled aria-label="Rename"><Rename /></Command>
      <Command $w={48} disabled aria-label="Share"><ShareBlue /></Command>
      <Command $w={48} disabled aria-label="Delete"><Trash /></Command>
      <CommandRule $right />
      <Command $w={68}><SortIcon />Sort <Chevron size={8} sw={2.4} /></Command>
      <Command $w={114}><ViewIcon />View <Chevron size={8} sw={2.4} /></Command>
    </Commands>
    <PathRow>
      <NavButton $dim aria-label="Back"><Icon size={14} sw={2}><path d="M19 10H2M9 3l-7 7 7 7" /></Icon></NavButton>
      <NavButton aria-label="Forward"><Icon size={14} sw={2}><path d="M1 10h17M11 3l7 7-7 7" /></Icon></NavButton>
      <NavButton $dim $narrow aria-label="Recent"><Chevron size={10} sw={3} /></NavButton>
      <NavButton $narrow aria-label="Up"><Icon size={14} sw={2}><path d="M10 17V1M3.500 7.500 10 1l6.500 6.500" /></Icon></NavButton>
      <Crumbs>
        <li><Folder /></li>
        {['This PC', 'Storage (E:)', 'Educating', 'DOCS', 'SS_KT CT M-L'].map(c => <li key={c}><a href="#">{c}</a></li>)}
      </Crumbs>
    </PathRow>
    <Panes>
      <NavPane aria-label="Folders">
        <NavList>
          {navTop.map(([n, i]) => <NavEntry key={n} name={n} icon={i} />)}
          <NavRule />
          {navMain.map(([n, i, p]) => <NavEntry key={n} name={n} icon={i} pinned={p} />)}
          <NavRule />
          <NavEntry name="This PC" icon={<Monitor />} selected />
        </NavList>
        <NavScroll />
      </NavPane>
      <Files>
        <thead>
          <tr>
            <th>
              <HeadCell>
                <SelectAll type="checkbox" aria-label="Select all files" />
                Name
                <SortMark><Chevron size={9} sw={2} /></SortMark>
              </HeadCell>
            </th>
            <th><DateHead>Date modified</DateHead></th>
          </tr>
        </thead>
        <tbody>
          {files.map(([name, date, icon]) => (
            <tr key={name}><td><FileLink href="#">{icon}<span>{name}</span></FileLink></td><td>{date}</td></tr>
          ))}
        </tbody>
      </Files>
    </Panes>
    <Status>4 items</Status>
  </Explorer>
);

export default function App() {
  return (
    <Desktop>
      <GlobalStyle />
      <Bloom width="295" height="200" viewBox="0 0 295 200" aria-hidden="true">
        <defs>
          <linearGradient id="bloom" x1="0" y1="0" x2="1" y2=".4"><stop offset=".3" stopColor="#2f86e8" /><stop offset=".6" stopColor="#1560dc" /><stop offset="1" stopColor="#3a2a9c" /></linearGradient>
        </defs>
        <circle cx="4" cy="225" r="134" fill="url(#bloom)" />
        <g fill="none" stroke="#24304e" strokeWidth="5" opacity=".3"><ellipse cx="285" cy="180" rx="45" ry="33" /><ellipse cx="285" cy="185" rx="68" ry="52" /></g>
      </Bloom>
      <Notes>
        <NotesTitle>NOTES</NotesTitle>
        <ul>
          <NoteLine><Bullet>•</Bullet>T2_ 20/06_ C 2: SS008.M25 - KTCT -<br />GD3</NoteLine>
          <NoteLine><Bullet>•</Bullet>T3_ 21/06_ C 2: SS003.M25 - TTHCM</NoteLine>
          <NoteLine $blue>C.109</NoteLine>
          <NoteLine $blue><Bullet>•</Bullet>T5_ 23/06_ C 2: SS007.M24 - THML -<br />B.702</NoteLine>
        </ul>
      </Notes>
      <TopEdge />
      <BrowserWindow />
      <ExplorerWindow />
    </Desktop>
  );
}
